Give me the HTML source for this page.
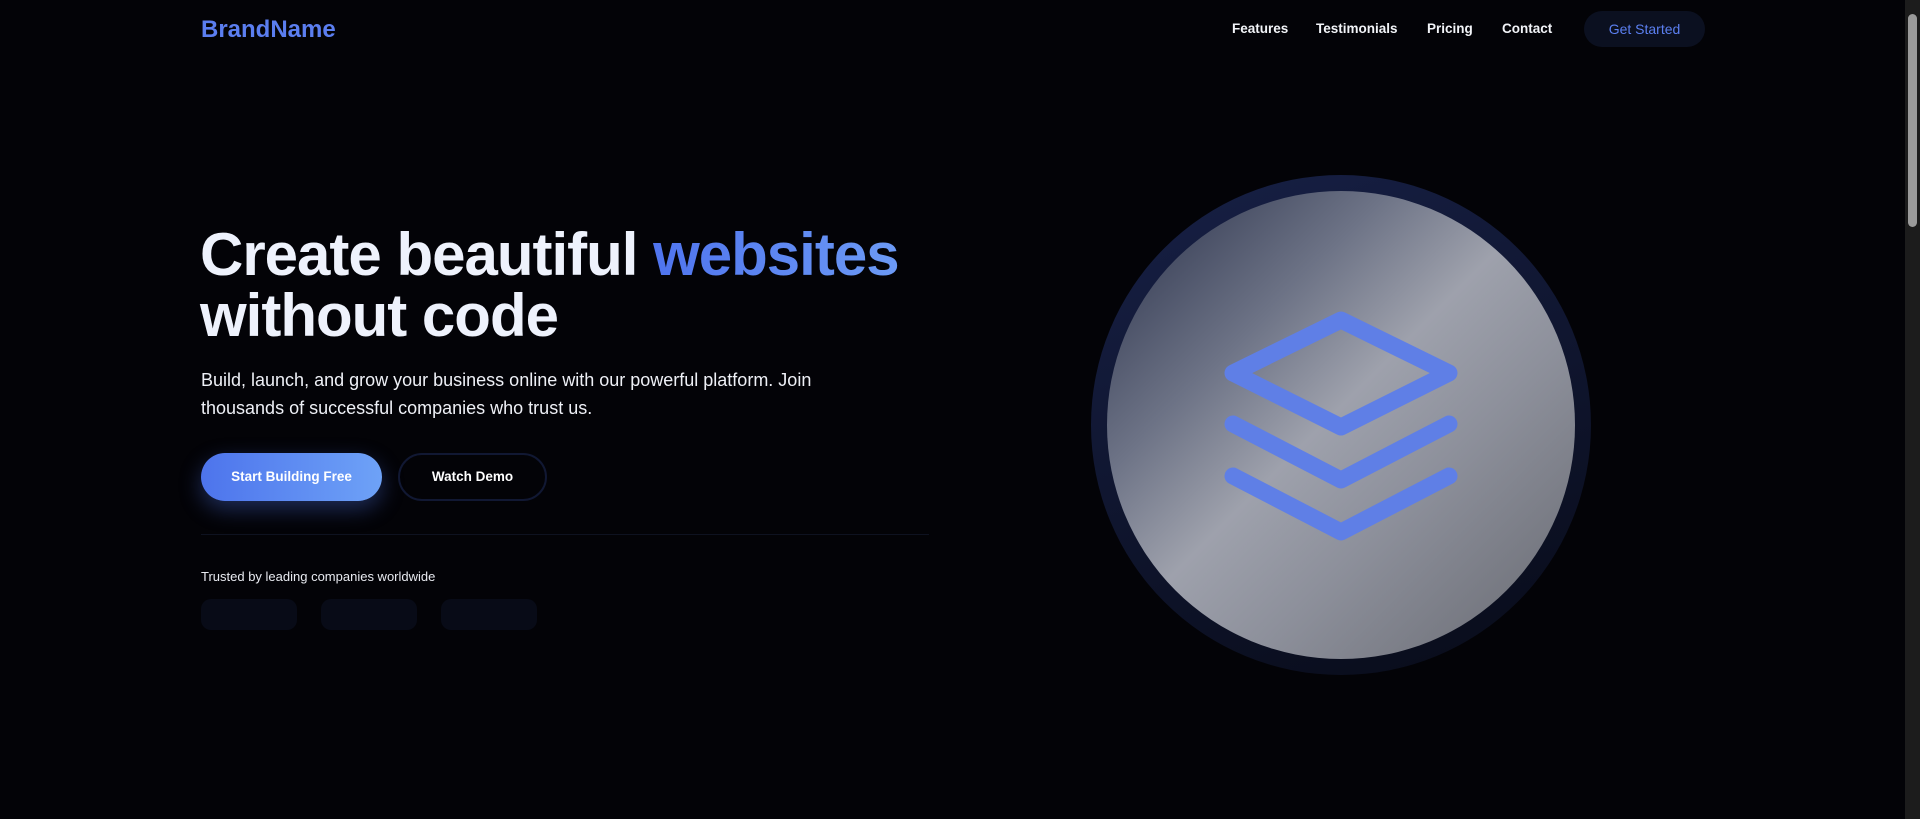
<!DOCTYPE html>
<html><head><meta charset="utf-8"><style>
*{margin:0;padding:0;box-sizing:border-box}
html,body{width:1920px;height:819px;overflow:hidden;background:#030307;font-family:"Liberation Sans",sans-serif;color:#fff}
.abs{position:absolute}
.brand{left:201px;top:16px;font-size:24px;font-weight:700;color:#5b7ef0}
.nav a{position:absolute;top:21px;font-size:13.5px;font-weight:700;color:#f2f4f8;text-decoration:none}
.gs{left:1584px;top:11px;width:121px;height:36px;border-radius:18px;background:#0b1020;color:#5b7ff0;font-size:14px;text-align:center;line-height:36px}
h1{position:absolute;left:200px;top:224px;font-size:60px;line-height:61px;font-weight:700;letter-spacing:-1px;color:#eef2fc}
h1 span{background:linear-gradient(90deg,#4f74ee,#6c9af5);-webkit-background-clip:text;color:transparent}
.p{left:201px;top:366px;width:640px;font-size:18px;line-height:28px;color:#eef0f6}
.b1{left:201px;top:453px;width:181px;height:48px;border-radius:24px;background:linear-gradient(90deg,#4d74ec,#6ea2f7);box-shadow:0 8px 22px rgba(80,120,240,.35);text-align:center;line-height:48px;font-size:13.5px;font-weight:700}
.b2{left:398px;top:453px;width:149px;height:48px;border-radius:24px;border:2px solid #111833;text-align:center;line-height:44px;font-size:13.5px;font-weight:700}
.hr{left:201px;top:534px;width:728px;height:1px;background:#0e1220}
.tr{left:201px;top:569px;font-size:13px;color:#e8eaf0}
.lg{top:599px;width:96px;height:31px;border-radius:10px;background:#080b17}
.ring{left:1091px;top:175px;width:500px;height:500px;border-radius:50%;background:linear-gradient(160deg,#172046,#080b18)}
.inner{left:1107px;top:191px;width:468px;height:468px;border-radius:50%;background:linear-gradient(135deg,#333a52 5%,#6d7386 30%,#9ea1ac 48%,#8d909b 65%,#6c6e76 95%)}
.sb{left:1905px;top:0;width:15px;height:819px;background:#1c1c1c}
.th{left:1908px;top:14px;width:9px;height:213px;border-radius:5px;background:#9a9a9a}
</style></head><body>
<div class="abs brand">BrandName</div>
<div class="nav"><a style="left:1232px">Features</a><a style="left:1316px">Testimonials</a><a style="left:1427px">Pricing</a><a style="left:1502px">Contact</a></div>
<div class="abs gs">Get Started</div>
<h1>Create beautiful <span>websites</span><br>without code</h1>
<div class="abs p">Build, launch, and grow your business online with our powerful platform. Join thousands of successful companies who trust us.</div>
<div class="abs b1">Start Building Free</div>
<div class="abs b2">Watch Demo</div>
<div class="abs hr"></div>
<div class="abs tr">Trusted by leading companies worldwide</div>
<div class="abs lg" style="left:201px"></div>
<div class="abs lg" style="left:321px"></div>
<div class="abs lg" style="left:441px"></div>
<div class="abs ring"></div>
<div class="abs inner"></div>
<svg class="abs" style="left:0;top:0" width="1920" height="819"><g fill="none" stroke="#5f7fe6" stroke-width="17" stroke-linecap="round" stroke-linejoin="round">
<path d="M1341 320 L1449 373 L1341 427 L1233 373 Z"/>
<path d="M1233 424 L1341 480 L1449 424"/>
<path d="M1233 476 L1341 532 L1449 476"/>
</g></svg>
<div class="abs sb"></div><div class="abs th"></div>
</body></html>
